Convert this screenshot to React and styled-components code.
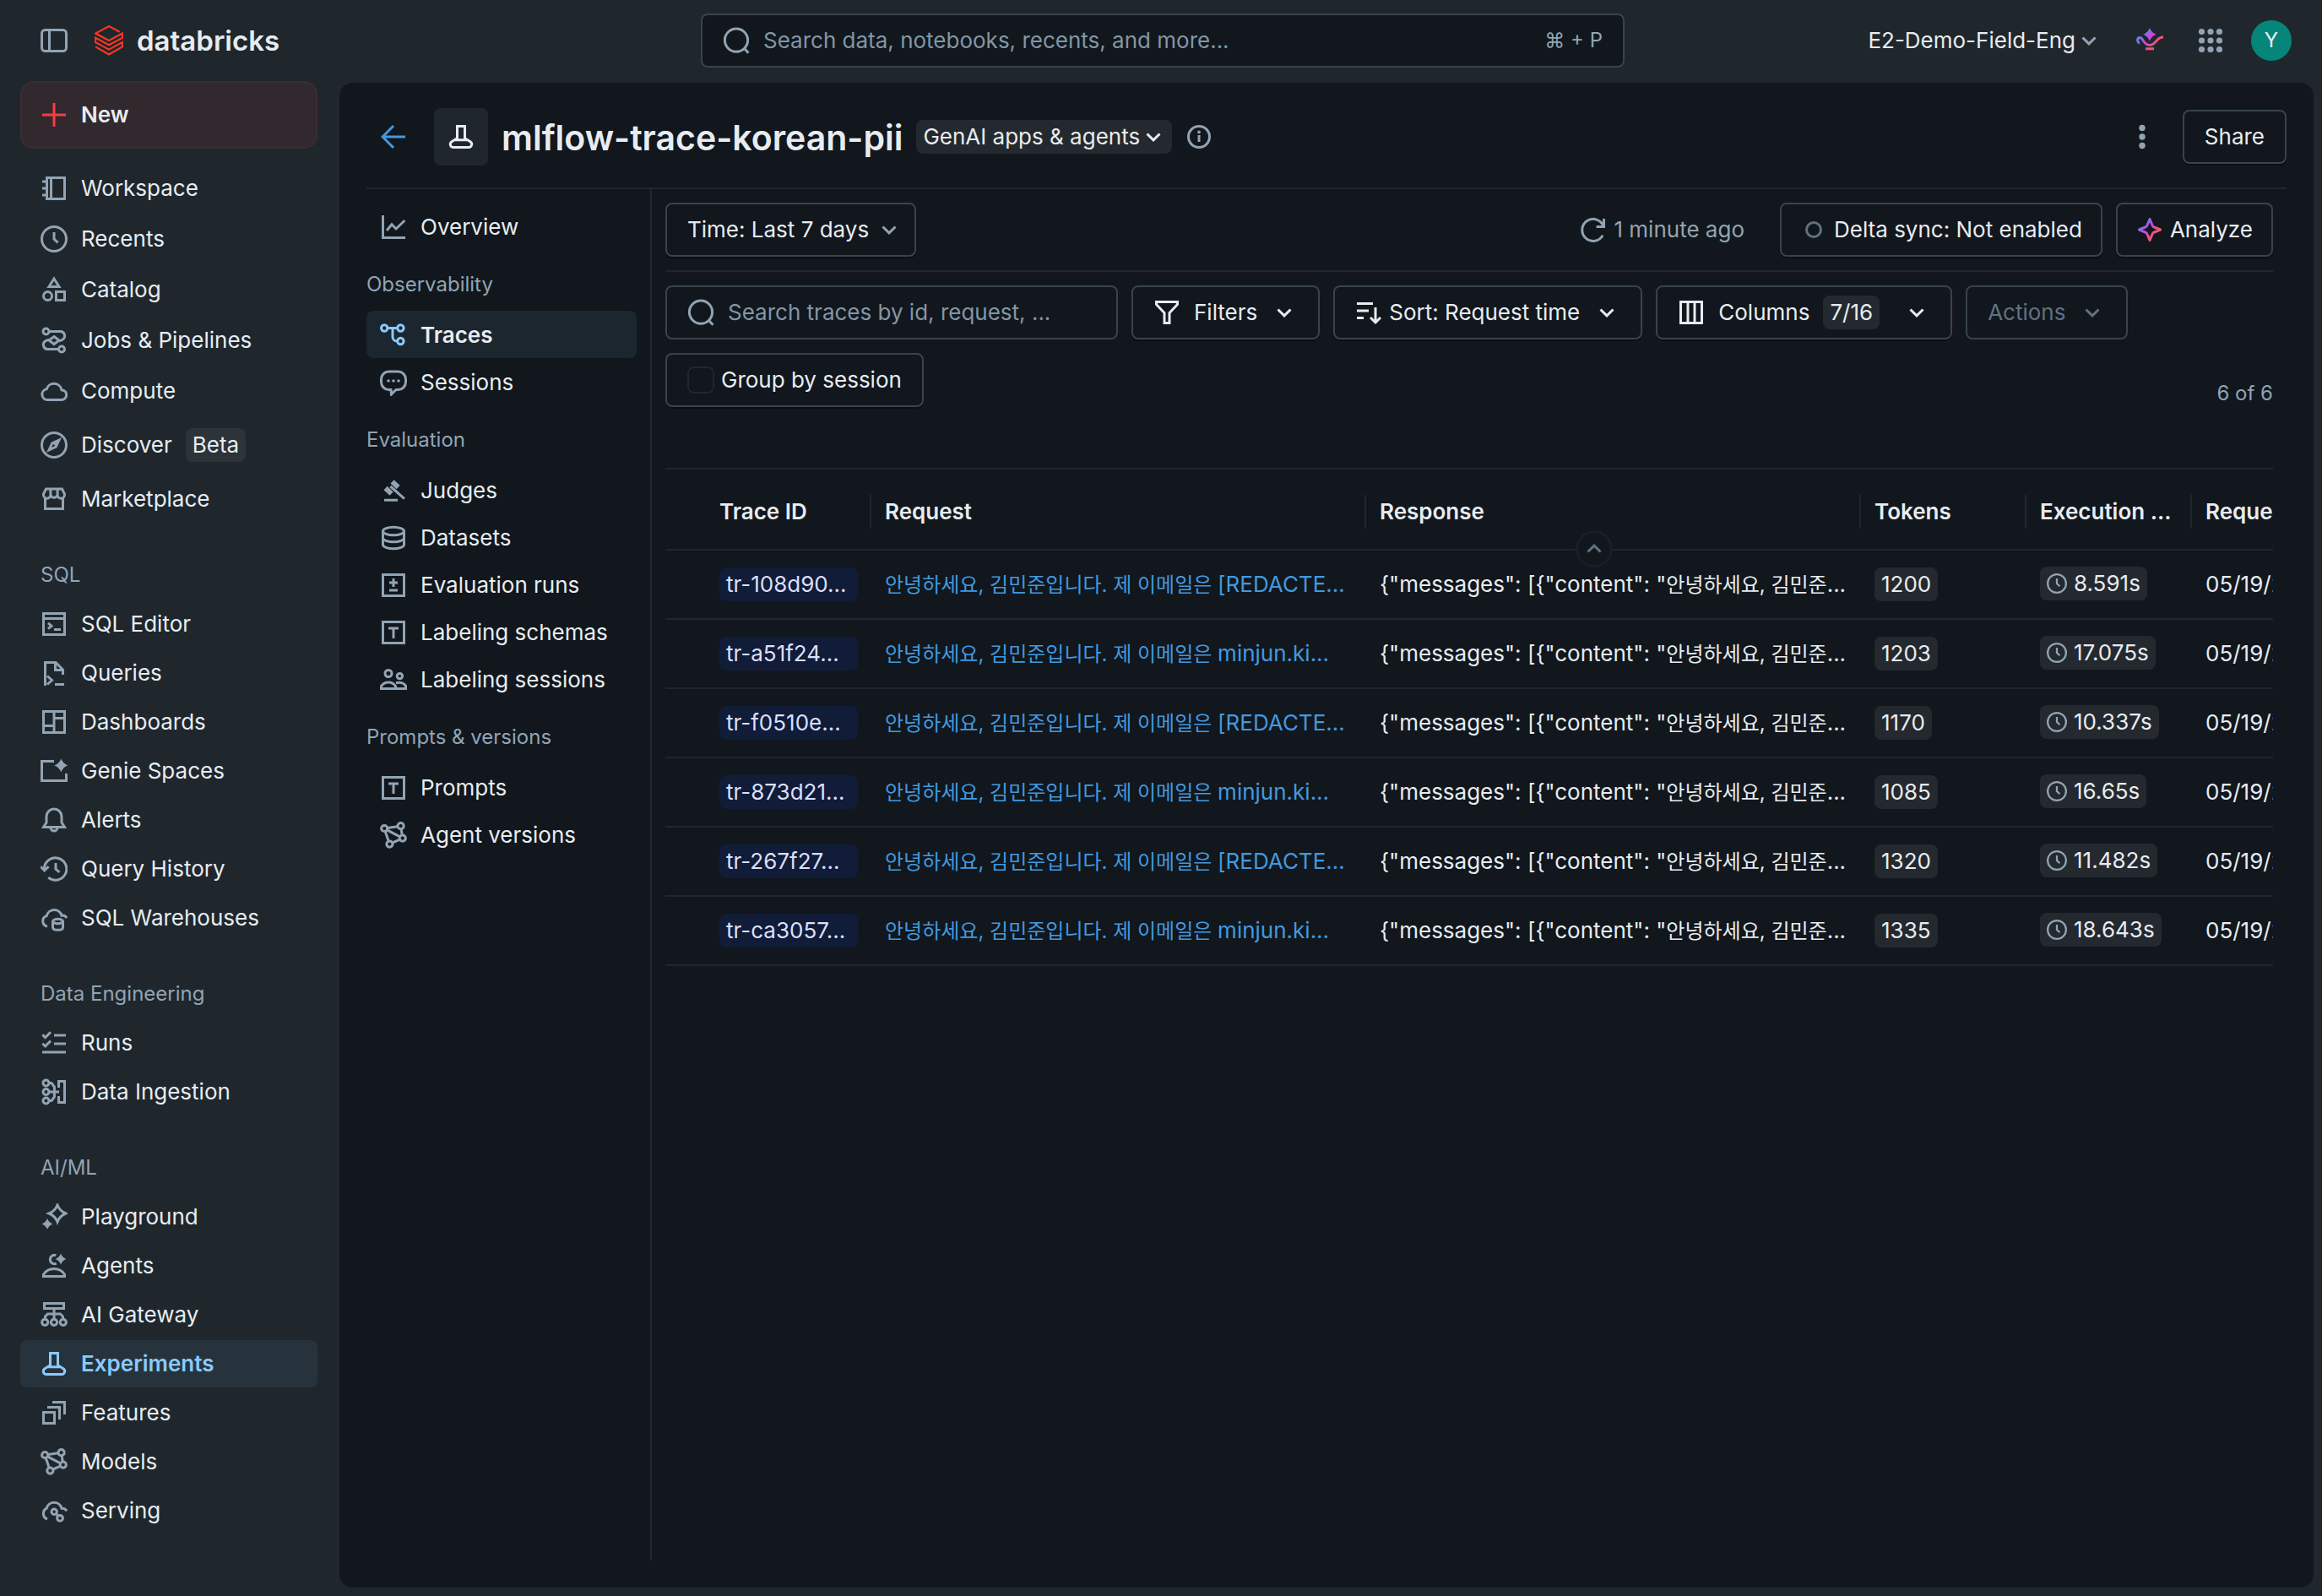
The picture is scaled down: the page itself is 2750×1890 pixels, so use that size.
import React, { Fragment } from 'react';
import styled, { createGlobalStyle, css } from 'styled-components';

const GlobalStyle = createGlobalStyle`
  :root {
    --bg-outer: #1f272d;
    --bg-panel: #11171d;
    --text: #e8ecf0;
    --text-muted: #92a4b3;
    --text-faint: #5f7281;
    --border: #37444f;
    --line: #20262e;
    --tag: #24292f;
    --link: #4299e0;
    --active: #8acaff;
    --red: #ff3b3f;
  }

  * {
    box-sizing: border-box;
  }

  body {
    margin: 0;
    background: var(--bg-outer);
    color: var(--text);
    font-family: Inter, 'Noto Sans CJK KR', sans-serif;
    font-size: 26px;
    line-height: 40px;
  }

  button,
  input {
    font: inherit;
    color: inherit;
  }

  a {
    color: inherit;
    text-decoration: none;
  }
`;

/* ---------- icons ---------- */

const Svg = styled.svg`
  flex: none;
  display: block;
  width: ${(p) => p.$size || 32}px;
  height: ${(p) => p.$size || 32}px;
  color: ${(p) => p.$color || 'inherit'};
  fill: none;
  stroke: currentColor;
  stroke-width: 1.5;

  .solid {
    fill: currentColor;
    stroke: none;
  }
`;

const star = (x, y, r) => {
  const k = r * 0.28;
  return `M${x} ${y - r}Q${x + k} ${y - k} ${x + r} ${y}Q${x + k} ${y + k} ${x} ${y + r}Q${x - k} ${y + k} ${x - r} ${y}Q${x - k} ${y - k} ${x} ${y - r}Z`;
};

const modelShape = (
  <Fragment>
    <circle cx='2.6' cy='4' r='1.8' />
    <circle cx='12.3' cy='2.6' r='1.8' />
    <circle cx='13.4' cy='9.8' r='1.8' />
    <circle cx='5.7' cy='13.3' r='1.8' />
    <path d='M4.4 3.8l6.1-.9M12.6 4.4l.5 3.6M11.8 10.6l-4.4 1.9M3.1 5.8l2 5.7M4.2 4.9l7.6 4' />
  </Fragment>
);

const textShape = (
  <Fragment>
    <rect x='1.75' y='1.75' width='12.5' height='12.5' />
    <path d='M5 5.5h6M8 5.5V11.5' />
  </Fragment>
);

const shapes = {
  panel: (
    <Fragment>
      <rect x='.75' y='1.75' width='14.5' height='12.5' rx='2' />
      <path d='M5.25 2v12' />
    </Fragment>
  ),
  plus: <path d='M8 1v14M1 8h14' />,
  notebook: (
    <Fragment>
      <rect x='3.75' y='1.75' width='10.5' height='12.5' />
      <path d='M6.25 2v12M1 4h3M1 8h3M1 12h3' />
    </Fragment>
  ),
  clock: (
    <Fragment>
      <circle cx='8' cy='8' r='7.25' />
      <path d='M8 4v4l2.3 2.2' />
    </Fragment>
  ),
  catalog: (
    <Fragment>
      <path d='M8 1.5l3 4.75H5z' />
      <circle cx='4.25' cy='11.75' r='2.5' />
      <rect x='9.25' y='9.25' width='5' height='5' />
    </Fragment>
  ),
  jobs: (
    <Fragment>
      <circle cx='3.25' cy='2.75' r='1.75' />
      <circle cx='12.5' cy='13.25' r='1.75' />
      <path d='M5 2.75h6.5a2.6 2.6 0 0 1 1.4 4.9L11 8.5M5 7.5L3.1 8.35a2.6 2.6 0 0 0 1.4 4.9h6.25M8 5.75L11 8l-3 2.25L5 8z' />
    </Fragment>
  ),
  cloud: (
    <path d='M4 13.25h8.3a2.95 2.95 0 0 0 .2-5.9A4.6 4.6 0 0 0 3.6 6.9 3.2 3.2 0 0 0 4 13.25z' />
  ),
  compass: (
    <Fragment>
      <circle cx='8' cy='8' r='7.25' />
      <path d='M11 5L9.1 9.1 5 11l1.9-4.1z' />
      <circle className='solid' cx='9' cy='7' r='1.3' />
    </Fragment>
  ),
  market: (
    <path d='M1.75 5l1.5-3h9.5l1.5 3v.5a2.1 2.1 0 0 1-4.2 0 2.1 2.1 0 0 1-4.1 0 2.1 2.1 0 0 1-4.2 0zM5.95 2v3.5M10.05 2v3.5M2.75 7.5v6.25h10.5V7.5' />
  ),
  editor: (
    <path d='M1.75 1.75h12.5v12.5H1.75zM2 4.75h12M4.5 7.4l2 1.7-2 1.7M8 11.25h4' />
  ),
  query: (
    <path d='M2.75 15.5V1.75H9l4.25 4.25v3M8.75 2v4.25H13M4 9.75l2.75 2.5L4 14.75M8.5 14.75H14' />
  ),
  dashboard: (
    <path d='M1.75 1.75h12.5v12.5H1.75zM8 2v12M2 10.25h6M8 5.75h6' />
  ),
  genie: (
    <Fragment>
      <path d='M8 2.25H.75v11.5h14.5V9.5' />
      <path className='solid' d={star(12.2, 4.7, 4)} />
    </Fragment>
  ),
  bell: (
    <path d='M1.75 12.25h12.5L12.5 9.5V6a4.5 4.5 0 0 0-9 0v3.5zM6 12.5a2 2 0 0 0 4 0' />
  ),
  history: (
    <path d='M2.2 8A6.6 6.6 0 1 1 4.6 13.1M0 6.6l2.3 2.3 2.5-2.3M9 4.5V8l2.2 2' />
  ),
  warehouse: (
    <Fragment>
      <path d='M4 13a3.2 3.2 0 0 1-.4-6.2 4.6 4.6 0 0 1 8.9-.2 3 3 0 0 1 3 1.4' />
      <ellipse cx='10.25' cy='10' rx='3' ry='1.4' />
      <path d='M7.25 10v3.6c0 .9 1.3 1.5 3 1.5s3-.6 3-1.5V10' />
    </Fragment>
  ),
  runs: (
    <path d='M1.2 3.2l1.6 1.6L6 1.6M1.2 8.4L2.8 10 6 6.8M8 3.5h7M8 8.5h7M1 13.5h14' />
  ),
  ingestion: (
    <Fragment>
      <circle cx='3.25' cy='2.75' r='1.75' />
      <circle cx='3.25' cy='8' r='1.75' />
      <circle cx='3.25' cy='13.25' r='1.75' />
      <path d='M5 2.75h1.5L8.2 5v6l-1.7 2.25H5M5 8h6M10.75 5.5V1.75h3.5v12.5h-3.5V10.5' />
    </Fragment>
  ),
  sparkles: (
    <Fragment>
      <path d={star(10, 6, 5)} />
      <path className='solid' d={star(4, 12.2, 3.2)} />
    </Fragment>
  ),
  agent: (
    <Fragment>
      <path d='M9.2 1.8a2.6 2.6 0 1 0 .2 4.8M1.75 14.25v-1.1C3 11 5.4 9.75 8 9.75s5 1.25 6.25 3.4v1.1z' />
      <path className='solid' d={star(12, 4, 3.2)} />
    </Fragment>
  ),
  gateway: (
    <Fragment>
      <rect x='2.25' y='1.25' width='11.5' height='3' />
      <path d='M8 4.5v6M2.75 10.5V9l1.5-1.5h7.5L13.25 9v1.5' />
      <circle cx='2.6' cy='12.4' r='1.8' />
      <circle cx='8' cy='12.4' r='1.8' />
      <circle cx='13.4' cy='12.4' r='1.8' />
    </Fragment>
  ),
  beaker: (
    <path d='M5.75 1.75h4.5v7.1l3.25 2a1.85 1.85 0 0 1-1 3.4H3.5a1.85 1.85 0 0 1-1-3.4l3.25-2zM4.5 9.9h7' />
  ),
  features: (
    <path d='M1.75 7.75h6.5v6.5h-6.5zM4 4.75h7.25V12M7 1.75h7.25V9' />
  ),
  models: modelShape,
  serving: (
    <Fragment>
      <path d='M4 13a3.5 3.5 0 0 1-.4-6.4 4.6 4.6 0 0 1 8.9 0 3 3 0 0 1 3 1.6M9.2 9.8l1.3 1.4' />
      <circle cx='8.1' cy='8.6' r='1.6' />
      <circle cx='11.5' cy='12.4' r='1.7' />
    </Fragment>
  ),
  chart: <path d='M1.75 1v13.25H15M4 10l3-3.6 2.5 2.6L14.7 4' />,
  traces: (
    <Fragment>
      <circle cx='2.6' cy='3.75' r='1.85' />
      <circle cx='12.2' cy='3.75' r='1.85' />
      <circle cx='12.2' cy='11.5' r='1.85' />
      <path d='M4.5 3.75h5.8M7.5 3.75V9a2.5 2.5 0 0 0 2.5 2.5' />
    </Fragment>
  ),
  speech: (
    <Fragment>
      <path d='M6.5 12.25H5.25a4.5 4.5 0 0 1-4.5-4.5V6a4.5 4.5 0 0 1 4.5-4.5h5.5A4.5 4.5 0 0 1 15.25 6v1.75a4.5 4.5 0 0 1-4.5 4.5H9.5L6.75 15z' />
      <circle className='solid' cx='5' cy='7' r='.9' />
      <circle className='solid' cx='8' cy='7' r='.9' />
      <circle className='solid' cx='11' cy='7' r='.9' />
    </Fragment>
  ),
  gavel: (
    <Fragment>
      <path d='M2.5 13.6h8M6.2 5.5l8.3 7.3' />
      <path strokeWidth='3' d='M7.3 2.7l3.5 3.3M3.3 6.5l3.5 3.3' />
    </Fragment>
  ),
  database: (
    <Fragment>
      <ellipse cx='8' cy='4' rx='6.25' ry='2.4' />
      <path d='M1.75 4v8c0 1.3 2.8 2.4 6.25 2.4s6.25-1.1 6.25-2.4V4M1.75 8c0 1.3 2.8 2.4 6.25 2.4S14.25 9.3 14.25 8' />
    </Fragment>
  ),
  plusMinus: (
    <path d='M1.75 1.75h12.5v12.5H1.75zM8 4v5M5.5 6.5h5M5.5 11h5' />
  ),
  text: textShape,
  users: (
    <Fragment>
      <circle cx='5' cy='4.25' r='2' />
      <circle cx='11.7' cy='5.8' r='1.6' />
      <path d='M.75 13.25v-1.5c1-1.5 2.6-2.25 4.25-2.25s3.25.75 4.25 2.25v1.5zM9.5 9.9c2.5-.7 4.6.1 5.75 1.7v1.65h-6' />
    </Fragment>
  ),
  search: (
    <Fragment>
      <circle cx='8' cy='7.8' r='6.8' />
      <path d='M12.7 12.6l2.5 2.8' />
    </Fragment>
  ),
  chevronDown: <path d='M4.25 6.25L8 9.9l3.75-3.65' />,
  chevronUp: <path d='M4.25 9.75L8 6.1l3.75 3.65' />,
  arrowLeft: <path d='M15 8H2M8 1.5L1.6 8 8 14.5' />,
  info: (
    <Fragment>
      <circle cx='8' cy='8' r='6.25' />
      <path d='M8 7v4' />
      <circle className='solid' cx='8' cy='5.2' r='.95' />
    </Fragment>
  ),
  overflow: (
    <Fragment>
      <circle className='solid' cx='8' cy='2.75' r='1.85' />
      <circle className='solid' cx='8' cy='8' r='1.85' />
      <circle className='solid' cx='8' cy='13.25' r='1.85' />
    </Fragment>
  ),
  refresh: (
    <path d='M13.6 11.3A6.5 6.5 0 1 1 14 6M14.25 1.5v4.75H9.8' />
  ),
  ring: <circle cx='8' cy='8' r='4.25' />,
  filter: (
    <path d='M1.75 1.75h12.5v1.5l-4.75 5v6h-3v-6l-4.75-5z' />
  ),
  sort: <path d='M1 2.75h9.5M1 7h7M1 11.25h4M12 5v9M9 11l3 3 3-3' />,
  columns: <path d='M1.75 1.75h12.5v12.5H1.75zM6 2v12M10 2v12' />,
};

const Icon = ({ name, size, color }) => (
  <Svg viewBox='0 0 16 16' $size={size} $color={color} aria-hidden='true'>
    {shapes[name]}
  </Svg>
);

const Gradient = ({ id }) => (
  <defs>
    <linearGradient id={id} x1='1' y1='2' x2='14' y2='14' gradientUnits='userSpaceOnUse'>
      <stop offset='.1' stopColor='#4299e0' />
      <stop offset='.45' stopColor='#ca42e0' />
      <stop offset='.85' stopColor='#ff5f46' />
    </linearGradient>
  </defs>
);

const LampIcon = () => (
  <Svg viewBox='0 0 16 16' aria-hidden='true'>
    <Gradient id='lamp' />
    <g stroke='url(#lamp)'>
      <path d='M1.9 9.8C.2 8.6.6 6.3 2.2 6.3c2 0 2 4.4 5.8 4.4 3.9 0 3.6-4.7 8-4.7M5.5 12.9h5' />
    </g>
    <path d={star(8, 4.4, 3.8)} fill='url(#lamp)' stroke='none' />
  </Svg>
);

const AnalyzeIcon = () => (
  <Svg viewBox='0 0 16 16' aria-hidden='true'>
    <Gradient id='analyze' />
    <path
      stroke='url(#analyze)'
      strokeLinejoin='round'
      d='M8 1.75l1.5 3.6a2 2 0 0 0 1.15 1.15L14.25 8l-3.6 1.5A2 2 0 0 0 9.5 10.65L8 14.25l-1.5-3.6A2 2 0 0 0 5.35 9.5L1.75 8l3.6-1.5A2 2 0 0 0 6.5 5.35z'
    />
  </Svg>
);

const AppsIcon = () => (
  <Svg viewBox='0 0 16 16' $color='var(--text-muted)' aria-hidden='true'>
    {[2.75, 8, 13.25].map((y) =>
      [2.75, 8, 13.25].map((x) => (
        <circle className='solid' key={`${x}-${y}`} cx={x} cy={y} r='1.8' />
      ))
    )}
  </Svg>
);

const LogoMark = styled.svg`
  width: 34px;
  height: 36px;
  fill: none;
  stroke: #ff3621;
  stroke-width: 2;
`;

/* ---------- top bar ---------- */

const Shell = styled.div`
  display: flex;
  flex-direction: column;
  min-height: 100vh;
`;

const TopBar = styled.header`
  display: grid;
  grid-template-columns: 1fr minmax(0, 1094px) 1fr;
  align-items: center;
  height: 96px;
  padding: 0 36px 0 40px;
`;

const TopLeft = styled.div`
  display: flex;
  align-items: center;
  gap: 24px;
`;

const Brand = styled.a`
  display: flex;
  align-items: center;
  gap: 16px;
  font-size: 33px;
  font-weight: 600;
`;

const TopRight = styled.div`
  display: flex;
  align-items: center;
  justify-content: flex-end;
  gap: 24px;
`;

const IconButton = styled.button`
  display: flex;
  align-items: center;
  justify-content: center;
  padding: 8px;
  border: none;
  background: none;
  color: var(--text-muted);
  cursor: pointer;
`;

const WorkspaceButton = styled(IconButton)`
  padding: 0 8px 0 0;
  color: var(--text);
`;

const Avatar = styled.button`
  width: 48px;
  height: 48px;
  padding: 0;
  border: none;
  border-radius: 50%;
  background: #06857a;
  font-size: 24px;
`;

const SearchBox = styled.label`
  display: flex;
  align-items: center;
  gap: 16px;
  height: 64px;
  padding: 0 24px;
  border: 2px solid var(--border);
  border-radius: 8px;
  background: var(--bg-panel);
  color: var(--text-muted);
  ${(p) =>
    p.$compact &&
    css`
      flex: 0 1 536px;
    `}

  input {
    flex: 1;
    min-width: 0;
    padding: 0;
    border: none;
    outline: none;
    background: none;
    color: var(--text);
  }

  input::placeholder {
    color: #8396a5;
    opacity: 1;
  }
`;

const Shortcut = styled.span`
  font-family: Inter, 'DejaVu Sans', sans-serif;
  font-size: 24px;
`;

/* ---------- sidebar ---------- */

const Body = styled.div`
  display: grid;
  grid-template-columns: 402px minmax(0, 1fr);
  flex: 1;
`;

const Sidebar = styled.nav`
  padding: 0 26px 0 24px;
`;

const NewButton = styled.button`
  display: flex;
  align-items: center;
  gap: 16px;
  width: 100%;
  height: 80px;
  padding: 0 22px;
  margin-bottom: 19px;
  border: 2px solid #402b31;
  border-radius: 16px;
  background: #32292e;
  font-weight: 600;
  cursor: pointer;

  svg {
    color: var(--red);
  }
`;

const NavGroup = styled.div`
  display: flex;
  flex-direction: column;
  gap: ${(p) => p.$gap}px;
`;

const NavTitle = styled.h2`
  margin: 42px 0 10px;
  padding-left: 24px;
  font-size: 24px;
  font-weight: 400;
  color: var(--text-muted);
`;

const NavLink = styled.a`
  display: flex;
  align-items: center;
  gap: 16px;
  height: ${(p) => (p.$tall ? 64 : 56)}px;
  padding: 0 24px;
  border-radius: 8px;

  svg {
    color: var(--text-muted);
  }

  ${(p) =>
    p.$active &&
    css`
      background: #27333c;
      color: var(--active);
      font-weight: 600;

      svg {
        color: var(--active);
      }
    `}
`;

const Tag = styled.span`
  display: inline-flex;
  align-items: center;
  gap: 8px;
  height: 40px;
  padding: 0 8px;
  border-radius: 8px;
  background: ${(p) => p.$bg || 'var(--tag)'};
  color: ${(p) => p.$color || 'var(--text)'};
  white-space: nowrap;
`;

/* ---------- main panel ---------- */

const Panel = styled.main`
  display: flex;
  flex-direction: column;
  margin: 2px 10px 10px 0;
  padding: 0 32px 32px;
  border-radius: 16px;
  background: var(--bg-panel);
`;

const PageHeader = styled.div`
  display: flex;
  align-items: center;
  justify-content: space-between;
  height: 126px;
  padding-top: 4px;
  border-bottom: 2px solid var(--line);
`;

const HeaderGroup = styled.div`
  display: flex;
  align-items: center;
  gap: ${(p) => p.$gap || 16}px;
`;

const BackLink = styled.a`
  padding: 16px;
  color: var(--link);
`;

const TitleIcon = styled.div`
  display: flex;
  align-items: center;
  justify-content: center;
  width: 64px;
  height: 68px;
  border-radius: 8px;
  background: var(--bg-outer);
`;

const Title = styled.h1`
  margin: 0;
  padding-top: 2px;
  font-size: 41px;
  line-height: 56px;
  font-weight: 600;
`;

const TypeButton = styled.button`
  display: flex;
  align-items: center;
  height: 40px;
  padding: 0 6px 0 8px;
  border: none;
  border-radius: 8px;
  background: var(--tag);
  cursor: pointer;
`;

const Button = styled.button`
  display: flex;
  align-items: center;
  gap: ${(p) => p.$gap || 8}px;
  height: 64px;
  padding: 0 24px;
  border: 2px solid var(--border);
  border-radius: 8px;
  background: var(--bg-panel);
  box-shadow: 0 2px 0 rgba(0, 0, 0, 0.35);
  white-space: nowrap;
  cursor: pointer;

  &:disabled {
    color: var(--text-faint);
    box-shadow: none;
    cursor: default;
  }
`;

const TimeButton = styled(Button)`
  padding-right: 14px;
`;

const StatusButton = styled(Button)`
  padding: 0 22px;
`;

const ColumnsButton = styled(Button)`
  ${Tag} {
    margin-right: 12px;
  }
`;

const CheckButton = styled(Button)`
  input {
    appearance: none;
    width: 32px;
    height: 32px;
    margin: 0;
    border: 2px solid var(--line);
    border-radius: 8px;
  }
`;

const PanelBody = styled.div`
  display: grid;
  grid-template-columns: 338px minmax(0, 1fr);
  flex: 1;
`;

const SideNav = styled.nav`
  padding: 16px 16px 0 0;
  border-right: 2px solid var(--line);
`;

const SideTitle = styled.h2`
  margin: 21px 0 11px;
  font-size: 24px;
  font-weight: 400;
  color: var(--text-muted);
`;

const SideLink = styled.a`
  display: flex;
  align-items: center;
  gap: 16px;
  height: 56px;
  padding: 1px 16px 0;
  border-radius: 8px;
  font-weight: ${(p) => (p.$active ? 600 : 400)};
  background: ${(p) => (p.$active ? '#1c262f' : 'none')};

  svg {
    color: ${(p) => (p.$active ? 'var(--active)' : 'var(--text-muted)')};
  }
`;

const Content = styled.section`
  padding: 16px 16px 0;
`;

const TimeRow = styled.div`
  display: flex;
  align-items: center;
  justify-content: space-between;
  padding-bottom: 16px;
  border-bottom: 2px solid var(--line);
`;

const Refreshed = styled.button`
  display: flex;
  align-items: center;
  gap: 8px;
  margin-right: 26px;
  padding: 0;
  border: none;
  background: none;
  color: var(--text-muted);
`;

const FilterRow = styled.div`
  display: flex;
  flex-wrap: wrap;
  gap: 16px;
  padding: 16px 0 72px;
`;

const Count = styled.span`
  align-self: flex-end;
  margin-left: auto;
  font-size: 24px;
  line-height: 32px;
  color: var(--text-muted);
`;

/* ---------- table ---------- */

const TableWrap = styled.div`
  position: relative;
  overflow: hidden;
  border-top: 2px solid var(--line);
`;

const Table = styled.table`
  width: 2004px;
  table-layout: fixed;
  border-collapse: collapse;
`;

const Col = styled.col`
  width: ${(p) => p.$width}px;
`;

const Th = styled.th`
  height: 95px;
  padding: 6px 0 0;
  border-bottom: 2px solid var(--line);
  text-align: left;
  font-weight: 600;
  white-space: nowrap;
`;

const HeadLabel = styled.div`
  padding-left: 16px;
  border-right: 2px solid var(--line);
`;

const Td = styled.td`
  height: 82px;
  padding: 0 16px;
  border-bottom: 2px solid var(--line);
  white-space: nowrap;
`;

const TraceTag = styled(Tag)`
  width: 100%;
`;

const RequestLink = styled.a`
  color: var(--link);
`;

const Hangul = styled.span`
  font-size: 24px;
`;

const CollapseButton = styled.button`
  position: absolute;
  top: 72px;
  left: calc(50% + 126px);
  display: flex;
  align-items: center;
  justify-content: center;
  width: 44px;
  height: 44px;
  padding: 0;
  border: 3px solid #191f23;
  border-radius: 50%;
  background: var(--bg-panel);
  color: var(--text-faint);
`;

const mainLinks = [
  ['notebook', 'Workspace'],
  ['clock', 'Recents'],
  ['catalog', 'Catalog'],
  ['jobs', 'Jobs & Pipelines'],
  ['cloud', 'Compute'],
  ['compass', 'Discover', 'Beta'],
  ['market', 'Marketplace'],
];

const navSections = [
  {
    title: 'SQL',
    links: [
      ['editor', 'SQL Editor'],
      ['query', 'Queries'],
      ['dashboard', 'Dashboards'],
      ['genie', 'Genie Spaces'],
      ['bell', 'Alerts'],
      ['history', 'Query History'],
      ['warehouse', 'SQL Warehouses'],
    ],
  },
  {
    title: 'Data Engineering',
    links: [
      ['runs', 'Runs'],
      ['ingestion', 'Data Ingestion'],
    ],
  },
  {
    title: 'AI/ML',
    links: [
      ['sparkles', 'Playground'],
      ['agent', 'Agents'],
      ['gateway', 'AI Gateway'],
      ['beaker', 'Experiments'],
      ['features', 'Features'],
      ['models', 'Models'],
      ['serving', 'Serving'],
    ],
  },
];

const experimentSections = [
  { links: [['chart', 'Overview']] },
  {
    title: 'Observability',
    links: [
      ['traces', 'Traces'],
      ['speech', 'Sessions'],
    ],
  },
  {
    title: 'Evaluation',
    links: [
      ['gavel', 'Judges'],
      ['database', 'Datasets'],
      ['plusMinus', 'Evaluation runs'],
      ['text', 'Labeling schemas'],
      ['users', 'Labeling sessions'],
    ],
  },
  {
    title: 'Prompts & versions',
    links: [
      ['text', 'Prompts'],
      ['models', 'Agent versions'],
    ],
  },
];

const columns = [
  ['', 48],
  ['Trace ID', 196],
  ['Request', 586],
  ['Response', 586],
  ['Tokens', 196],
  ['Execution ...', 196],
  ['Request time', 196],
];

const traces = [
  { id: 'tr-108d90...', tail: '[REDACTE...', tokens: 1200, time: '8.591s' },
  { id: 'tr-a51f24...', tail: 'minjun.ki...', tokens: 1203, time: '17.075s' },
  { id: 'tr-f0510e...', tail: '[REDACTE...', tokens: 1170, time: '10.337s' },
  { id: 'tr-873d21...', tail: 'minjun.ki...', tokens: 1085, time: '16.65s' },
  { id: 'tr-267f27...', tail: '[REDACTE...', tokens: 1320, time: '11.482s' },
  { id: 'tr-ca3057...', tail: 'minjun.ki...', tokens: 1335, time: '18.643s' },
];

const Header = () => (
  <TopBar>
    <TopLeft>
      <IconButton aria-label='Toggle sidebar'>
        <Icon name='panel' />
      </IconButton>
      <Brand href='#'>
        <LogoMark viewBox='0 0 32 34' aria-hidden='true'>
          <path d='M28 7.3L16 1 1 9l15 8 15-8v5L16 22 1 14v5l15 8 15-8v5l-15 8.5L1 24' />
        </LogoMark>
        databricks
      </Brand>
    </TopLeft>
    <SearchBox>
      <Icon name='search' />
      <input
        type='text'
        aria-label='Search'
        placeholder='Search data, notebooks, recents, and more...'
      />
      <Shortcut>⌘ + P</Shortcut>
    </SearchBox>
    <TopRight>
      <WorkspaceButton>
        E2-Demo-Field-Eng
        <Icon name='chevronDown' color='var(--text-muted)' />
      </WorkspaceButton>
      <IconButton aria-label='Assistant'>
        <LampIcon />
      </IconButton>
      <IconButton aria-label='Apps'>
        <AppsIcon />
      </IconButton>
      <Avatar>Y</Avatar>
    </TopRight>
  </TopBar>
);

const MainNav = () => (
  <Sidebar>
    <NewButton>
      <Icon name='plus' />
      New
    </NewButton>
    <NavGroup $gap={4}>
      {mainLinks.map(([icon, label, badge]) => (
        <NavLink href='#' key={label} $tall={!!badge}>
          <Icon name={icon} />
          {label}
          {badge && <Tag $bg='#2c343a'>{badge}</Tag>}
        </NavLink>
      ))}
    </NavGroup>
    {navSections.map((section) => (
      <Fragment key={section.title}>
        <NavTitle>{section.title}</NavTitle>
        <NavGroup $gap={2}>
          {section.links.map(([icon, label]) => (
            <NavLink href='#' key={label} $active={label === 'Experiments'}>
              <Icon name={icon} />
              {label}
            </NavLink>
          ))}
        </NavGroup>
      </Fragment>
    ))}
  </Sidebar>
);

const ExperimentNav = () => (
  <SideNav>
    {experimentSections.map((section) => (
      <Fragment key={section.title || 'top'}>
        {section.title && <SideTitle>{section.title}</SideTitle>}
        {section.links.map(([icon, label]) => (
          <SideLink href='#' key={label} $active={label === 'Traces'}>
            <Icon name={icon} />
            {label}
          </SideLink>
        ))}
      </Fragment>
    ))}
  </SideNav>
);

const TraceTable = () => (
  <TableWrap>
    <Table>
      <colgroup>
        {columns.map(([label, width]) => (
          <Col key={label} $width={width} />
        ))}
      </colgroup>
      <thead>
        <tr>
          {columns.map(([label]) => (
            <Th key={label}>{label && <HeadLabel>{label}</HeadLabel>}</Th>
          ))}
        </tr>
      </thead>
      <tbody>
        {traces.map((trace) => (
          <tr key={trace.id}>
            <Td />
            <Td>
              <TraceTag $bg='#101c38' $color='#dcdffb'>
                {trace.id}
              </TraceTag>
            </Td>
            <Td>
              <RequestLink href='#'>
                <Hangul>안녕하세요, 김민준입니다. 제 이메일은 </Hangul>
                {trace.tail}
              </RequestLink>
            </Td>
            <Td>
              {'{"messages": [{"content": "'}
              <Hangul>안녕하세요, 김민준</Hangul>...
            </Td>
            <Td>
              <Tag>{trace.tokens}</Tag>
            </Td>
            <Td>
              <Tag>
                <Icon name='clock' size={24} color='var(--text-muted)' />
                {trace.time}
              </Tag>
            </Td>
            <Td>05/19/2026</Td>
          </tr>
        ))}
      </tbody>
    </Table>
    <CollapseButton aria-label='Collapse'>
      <Icon name='chevronUp' />
    </CollapseButton>
  </TableWrap>
);

const App = () => {
  return (
    <Shell>
      <GlobalStyle />
      <Header />
      <Body>
        <MainNav />
        <Panel>
          <PageHeader>
            <HeaderGroup>
              <BackLink href='#' aria-label='Back'>
                <Icon name='arrowLeft' />
              </BackLink>
              <TitleIcon>
                <Icon name='beaker' />
              </TitleIcon>
              <Title>mlflow-trace-korean-pii</Title>
              <TypeButton>
                GenAI apps &amp; agents
                <Icon name='chevronDown' />
              </TypeButton>
              <Icon name='info' color='var(--text-muted)' />
            </HeaderGroup>
            <HeaderGroup $gap={24}>
              <IconButton aria-label='More'>
                <Icon name='overflow' />
              </IconButton>
              <Button>Share</Button>
            </HeaderGroup>
          </PageHeader>
          <PanelBody>
            <ExperimentNav />
            <Content>
              <TimeRow>
                <TimeButton>
                  Time: Last 7 days
                  <Icon name='chevronDown' color='var(--text-muted)' />
                </TimeButton>
                <HeaderGroup>
                  <Refreshed>
                    <Icon name='refresh' />1 minute ago
                  </Refreshed>
                  <StatusButton>
                    <Icon name='ring' color='var(--text-faint)' />
                    Delta sync: Not enabled
                  </StatusButton>
                  <StatusButton>
                    <AnalyzeIcon />
                    Analyze
                  </StatusButton>
                </HeaderGroup>
              </TimeRow>
              <FilterRow>
                <SearchBox $compact>
                  <Icon name='search' />
                  <input
                    type='text'
                    aria-label='Search traces'
                    placeholder='Search traces by id, request, ...'
                  />
                </SearchBox>
                <Button $gap={16}>
                  <Icon name='filter' />
                  Filters
                  <Icon name='chevronDown' />
                </Button>
                <Button $gap={16}>
                  <HeaderGroup $gap={8}>
                    <Icon name='sort' />
                    Sort: Request time
                  </HeaderGroup>
                  <Icon name='chevronDown' />
                </Button>
                <ColumnsButton $gap={16}>
                  <Icon name='columns' />
                  Columns
                  <Tag>7/16</Tag>
                  <Icon name='chevronDown' />
                </ColumnsButton>
                <Button $gap={16} disabled>
                  Actions
                  <Icon name='chevronDown' />
                </Button>
                <CheckButton as='label'>
                  <input type='checkbox' />
                  Group by session
                </CheckButton>
                <Count>6 of 6</Count>
              </FilterRow>
              <TraceTable />
            </Content>
          </PanelBody>
        </Panel>
      </Body>
    </Shell>
  );
};

export default App;
